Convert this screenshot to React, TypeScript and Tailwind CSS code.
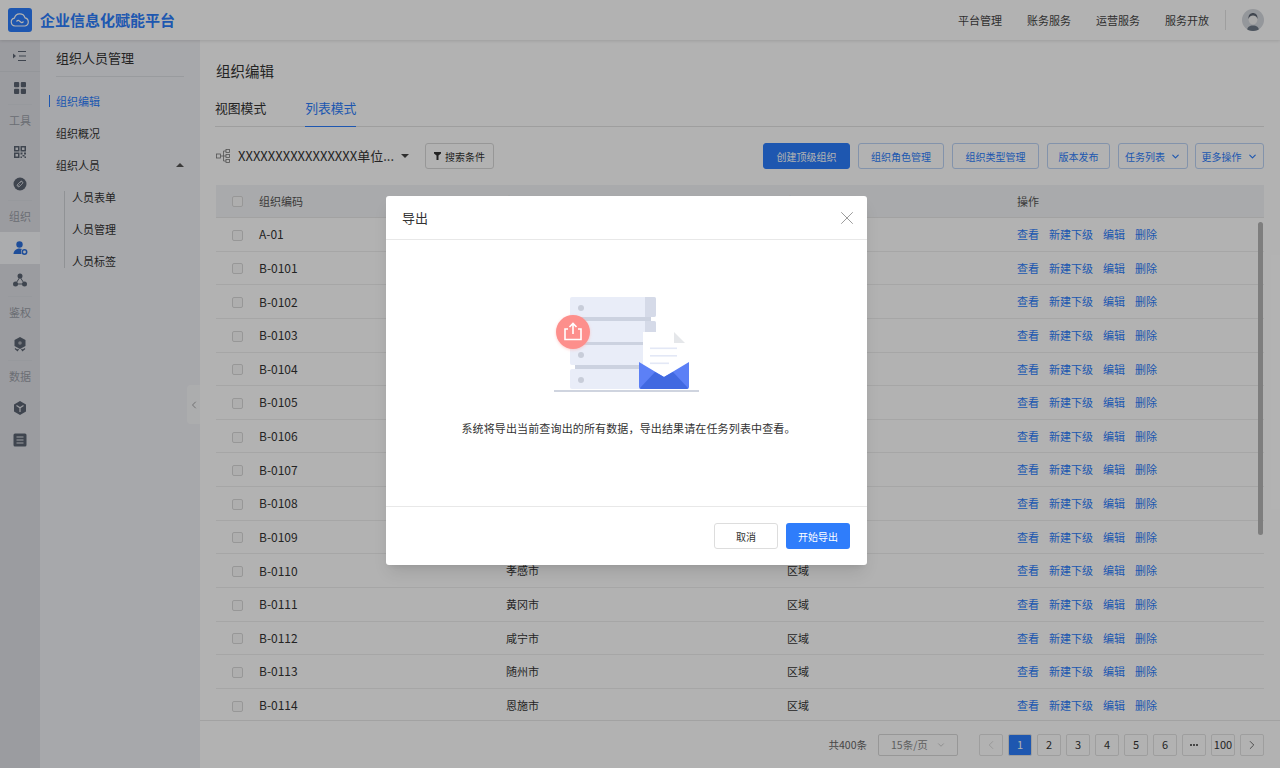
import { ChevronDown, ChevronLeft, ChevronRight, X } from "lucide-react";

const blue = "text-[#2b7dfc]";

const rowData = [
  { code: "A-01", name: "", type: "" },
  { code: "B-0101", name: "", type: "" },
  { code: "B-0102", name: "", type: "" },
  { code: "B-0103", name: "", type: "" },
  { code: "B-0104", name: "", type: "" },
  { code: "B-0105", name: "", type: "" },
  { code: "B-0106", name: "", type: "" },
  { code: "B-0107", name: "", type: "" },
  { code: "B-0108", name: "", type: "" },
  { code: "B-0109", name: "", type: "" },
  { code: "B-0110", name: "孝感市", type: "区域" },
  { code: "B-0111", name: "黄冈市", type: "区域" },
  { code: "B-0112", name: "咸宁市", type: "区域" },
  { code: "B-0113", name: "随州市", type: "区域" },
  { code: "B-0114", name: "恩施市", type: "区域" },
];

function RailIcon({ children }: { children: React.ReactNode }) {
  return (
    <div className="h-8 flex items-center justify-center">
      <svg width="16" height="16" viewBox="0 0 16 16" fill="#5b6472">
        {children}
      </svg>
    </div>
  );
}

function RailLabel({ children }: { children: React.ReactNode }) {
  return (
    <div className="h-8 mx-2 border-t border-[#d9dbe1] flex items-center justify-center text-[11px] text-[#9a9ea6]">
      {children}
    </div>
  );
}

function Rail() {
  return (
    <div className="w-10 shrink-0 bg-[#dfe0e6] flex flex-col">
      <div className="h-8 border-b border-[#d5d7dd] flex items-center justify-center">
        <svg width="16" height="14" viewBox="0 0 16 14" fill="none" stroke="#5b6472">
          <path d="M1 4.500v5l3-2.500z" fill="#5b6472" stroke="none" />
          <path d="M6 2.500h8M7 7h7M6 11.500h8" />
        </svg>
      </div>
      <RailIcon>
        <rect x="2" y="2" width="5.200" height="5.200" rx="1" />
        <rect x="8.800" y="2" width="5.200" height="5.200" rx="1" />
        <rect x="2" y="8.800" width="5.200" height="5.200" rx="1" />
        <rect x="8.800" y="8.800" width="5.200" height="5.200" rx="1" />
      </RailIcon>
      <RailLabel>工具</RailLabel>
      <RailIcon>
        <path d="M2 2h5.500v5.500H2zM3.500 3.500V6H6V3.500zM8.500 2H14v5.500H8.500zM10 3.500V6h2.500V3.500zM2 8.500h5.500V14H2zM3.500 10v2.500H6V10z" fillRule="evenodd" />
        <path d="M8.500 8.500h2v2h-2zM12 8.500h2v2h-2zM10.500 11h2v1.500h-2zM8.500 12.500h1.500V14H8.500zM12.500 12.500H14V14h-1.500z" />
      </RailIcon>
      <RailIcon>
        <circle cx="8" cy="8" r="6.500" />
        <path d="M9.500 5.500l-1 1M6.500 9.500l1-1M6.800 7.200L5.700 8.300a1.400 1.400 0 0 0 2 2l1.100-1.100M9.200 8.800l1.100-1.100a1.400 1.400 0 0 0-2-2L7.200 6.800" fill="none" stroke="#dfe0e6" />
      </RailIcon>
      <RailLabel>组织</RailLabel>
      <div className="h-8 bg-[#f5f6f9] flex items-center justify-center">
        <svg width="16" height="16" viewBox="0 0 16 16" fill="#2b6fdc">
          <circle cx="7.500" cy="4.500" r="3.200" />
          <path d="M1.500 14c0-3 2.500-5.500 6-5.500 1 0 1.800.2 2.500.5-1 .8-1.500 3-.5 5z" />
          <circle cx="12.500" cy="12" r="2.200" fill="none" stroke="#2b6fdc" strokeWidth="1.500" />
        </svg>
      </div>
      <RailIcon>
        <circle cx="8" cy="4" r="2.500" />
        <circle cx="3.500" cy="12" r="2.500" />
        <circle cx="12.500" cy="12" r="2.500" />
        <path d="M8 5L3.500 12h9z" fill="none" stroke="#5b6472" />
      </RailIcon>
      <RailLabel>鉴权</RailLabel>
      <RailIcon>
        <path d="M8 1l5.500 3v6L8 13l-5.500-3V4z" />
        <path d="M3 12.500l2.500 2 1-1.500M13 12.500l-2.500 2-1-1.500" fill="none" stroke="#5b6472" strokeWidth="1.200" />
        <circle cx="8" cy="7" r="1.800" fill="#a9adb5" />
      </RailIcon>
      <RailLabel>数据</RailLabel>
      <RailIcon>
        <path d="M8 1l6 3.400v7.200L8 15l-6-3.400V4.400z" />
        <path d="M4.500 5.500L8 7.800l3.500-2.300M8 7.800V12" fill="none" stroke="#dfe0e6" strokeWidth="1.200" />
      </RailIcon>
      <RailIcon>
        <rect x="1.500" y="1.500" width="13" height="13" rx="1.500" />
        <path d="M4.500 5h7M4.500 8h7M4.500 11h7" stroke="#dfe0e6" strokeWidth="1.200" />
      </RailIcon>
    </div>
  );
}

function SubMenu() {
  return (
    <div className="relative w-40 shrink-0 bg-[#f0f1f5] text-[11px] text-[#333]">
      <div className="mx-4 h-[37px] border-b border-[#dcdee3] flex items-center text-[13px]">组织人员管理</div>
      <div className="mt-2">
        <div className={`relative h-8 pl-4 flex items-center ${blue}`}>
          组织编辑
          <span className="absolute left-[9px] top-[10px] w-px h-3 bg-[#2b7dfc]" />
        </div>
        <div className="h-8 pl-4 flex items-center">组织概况</div>
        <div className="h-8 px-4 flex items-center justify-between">
          组织人员
          <svg width="8" height="4" viewBox="0 0 8 4" fill="#555"><path d="M4 0l4 4H0z" /></svg>
        </div>
        <div className="relative ml-6">
          <span className="absolute left-0 top-[10px] bottom-[9px] w-px bg-[#cfd1d6]" />
          <div className="h-8 pl-2 flex items-center">人员表单</div>
          <div className="h-8 pl-2 flex items-center">人员管理</div>
          <div className="h-8 pl-2 flex items-center">人员标签</div>
        </div>
      </div>
      <div className="absolute right-0 top-[345px] w-[13px] h-[39px] bg-[#f7f8fa] rounded-l flex items-center justify-center">
        <ChevronLeft size={12} strokeWidth={1.2} color="#666" />
      </div>
    </div>
  );
}

function ToolButton({ children, w, primary }: { children: React.ReactNode; w: string; primary?: boolean }) {
  return (
    <div
      className={`${w} h-[26px] rounded-[3px] border flex items-center justify-center gap-[5px] text-[10px] ${
        primary ? "bg-[#2b7dfc] border-[#2b7dfc] text-white" : "bg-white border-[#bcd3f5] text-[#2b7dfc]"
      }`}
    >
      {children}
    </div>
  );
}

function Checkbox() {
  return <div className="w-[11px] h-[11px] rounded-[2px] border border-[#d9d9d9] bg-[#fafafa]" />;
}

function Toolbar() {
  return (
    <div className="mt-4 h-[26px] flex items-center">
      <svg width="15" height="14" viewBox="0 0 15 14" fill="none" stroke="#777" strokeWidth="0.8">
        <rect x="0.500" y="5" width="4" height="4" />
        <rect x="10" y="0.500" width="3.500" height="3" />
        <rect x="10" y="5.500" width="3.500" height="3" />
        <rect x="10" y="10.500" width="3.500" height="3" />
        <path d="M4.500 7H10M7.500 2v10M7.500 2H10M7.500 12H10" />
      </svg>
      <span className="ml-[7px] text-[13px] text-[#333]">XXXXXXXXXXXXXXXX单位...</span>
      <svg className="ml-[7px]" width="8" height="4" viewBox="0 0 8 4" fill="#444"><path d="M0 0h8L4 4z" /></svg>
      <div className="ml-4 w-[69px] h-[26px] rounded-[3px] border border-[#d9d9d9] flex items-center justify-center gap-1 text-[10px] text-[#333]">
        <svg width="7" height="8" viewBox="0 0 7 8" fill="#333"><path d="M0 0h7v1.500L4.500 3.500V8h-2V3.500L0 1.500z" /></svg>
        搜索条件
      </div>
      <div className="ml-auto flex gap-2">
        <ToolButton w="w-[87px]" primary>创建顶级组织</ToolButton>
        <ToolButton w="w-[86px]">组织角色管理</ToolButton>
        <ToolButton w="w-[87px]">组织类型管理</ToolButton>
        <ToolButton w="w-[63px]">版本发布</ToolButton>
        <ToolButton w="w-[70px]">任务列表<ChevronDown size={11} strokeWidth={2.5} /></ToolButton>
        <div className="-ml-px">
          <ToolButton w="w-[69px]">更多操作<ChevronDown size={11} strokeWidth={2.5} /></ToolButton>
        </div>
      </div>
    </div>
  );
}

function Table() {
  return (
    <div className="relative mt-4 text-[11px] text-[#333]">
      <div className="h-[33px] bg-[#f3f4f6] border-b border-[#e8e8e8] flex items-center text-[#555]">
        <div className="w-[43px] pl-4"><Checkbox /></div>
        <div className="w-[247px]">组织编码</div>
        <div className="w-[281px]">组织名称</div>
        <div className="w-[230px]">组织类型</div>
        <div>操作</div>
      </div>
      {rowData.map((row) => (
        <div key={row.code} className="h-[33.640px] border-b border-[#eeeeee] flex items-center">
          <div className="w-[43px] pl-4 mt-[2px]"><Checkbox /></div>
          <div className="w-[247px] text-[12px]">{row.code}</div>
          <div className="w-[281px]">{row.name}</div>
          <div className="w-[230px]">{row.type}</div>
          <div className={`flex gap-[10px] ${blue}`}>
            <span>查看</span>
            <span>新建下级</span>
            <span>编辑</span>
            <span>删除</span>
          </div>
        </div>
      ))}
      <div className="absolute right-[1px] top-[37px] w-[5px] h-[313px] rounded bg-[#b5b5b5]" />
    </div>
  );
}

function Pager() {
  const cell = "w-6 h-[22px] rounded-[2px] border border-[#e3e3e3] flex items-center justify-center";
  return (
    <div className="absolute left-0 right-0 bottom-0 h-12 bg-white border-t border-[#e8e8e8] pr-4 flex items-center justify-end text-[11px] text-[#333]">
      <span className="text-[10.500px] text-[#666]">共400条</span>
      <div className="ml-[11px] w-20 h-[22px] rounded-[2px] border border-[#d9d9d9] flex items-center text-[10.500px] text-[#888]">
        <span className="ml-[12px]">15条/页</span>
        <ChevronDown className="ml-auto mr-[11px]" size={10} strokeWidth={1} />
      </div>
      <div className="ml-[21px] flex gap-[5px]">
        <div className={`${cell} text-[#ccc]`}><ChevronLeft size={14} strokeWidth={1.2} /></div>
        <div className={`${cell} bg-[#2b7dfc] border-[#2b7dfc] text-white`}>1</div>
        {["2", "3", "4", "5", "6"].map((p) => (
          <div key={p} className={cell}>{p}</div>
        ))}
        <div className={cell}>
          <svg width="8" height="2" viewBox="0 0 8 2" fill="#333">
            <circle cx="1" cy="1" r="1" />
            <circle cx="4" cy="1" r="1" />
            <circle cx="7" cy="1" r="1" />
          </svg>
        </div>
        <div className={cell}>100</div>
        <div className={cell}><ChevronRight size={14} strokeWidth={1.2} /></div>
      </div>
    </div>
  );
}

function ExportArt() {
  return (
    <svg width="190" height="125" viewBox="530 280 190 125">
      <defs>
        <filter id="soft" x="-30%" y="-30%" width="160%" height="160%">
          <feGaussianBlur stdDeviation="1.500" />
        </filter>
      </defs>
      <rect x="575" y="316" width="76" height="6" fill="#ccd2e0" />
      <rect x="575" y="340" width="76" height="6" fill="#ccd2e0" />
      <rect x="575" y="364" width="70" height="6" fill="#ccd2e0" />
      <rect x="570" y="297" width="86" height="20" rx="2" fill="#e9edf8" />
      <path d="M645 297h9a2 2 0 0 1 2 2v16a2 2 0 0 1-2 2h-9z" fill="#d5dae8" />
      <rect x="570" y="321" width="86" height="21" rx="2" fill="#e9edf8" />
      <path d="M645 321h9a2 2 0 0 1 2 2v17a2 2 0 0 1-2 2h-9z" fill="#d5dae8" />
      <rect x="570" y="345" width="80" height="20" rx="2" fill="#e9edf8" />
      <rect x="570" y="369" width="80" height="20" rx="2" fill="#e9edf8" />
      <circle cx="581" cy="308" r="3" fill="#c8cdd9" />
      <circle cx="581" cy="355" r="3" fill="#c8cdd9" />
      <circle cx="581" cy="380" r="3" fill="#c8cdd9" />
      <rect x="554" y="390" width="145" height="2" fill="#cfd4df" />
      <circle cx="573" cy="333" r="17" fill="#ffb3b0" opacity="0.6" filter="url(#soft)" />
      <circle cx="573" cy="332" r="17" fill="#fd8f8c" />
      <path d="M568 329h-3v10.500h16V329h-3" fill="none" stroke="#fff" strokeWidth="1.600" />
      <path d="M573 334v-10M569.500 327l3.500-3.500 3.500 3.500" fill="none" stroke="#fff" strokeWidth="1.600" />
      <path d="M643 332h31l11 11v40h-42z" fill="#fff" />
      <path d="M674 332l11 11h-11z" fill="#e5e7ea" />
      <rect x="650" y="347.500" width="27" height="1.600" fill="#e3e8f6" />
      <rect x="650" y="355" width="27" height="1.600" fill="#e3e8f6" />
      <rect x="650" y="362.500" width="19" height="1.600" fill="#e3e8f6" />
      <path d="M639 362l25 15 25-15v25a2 2 0 0 1-2 2h-46a2 2 0 0 1-2-2z" fill="#5c80f6" />
      <path d="M640 388l15-16 9 5 9-5 15 16a2 2 0 0 1-1 1h-46a2 2 0 0 1-1-1z" fill="#4169e1" />
    </svg>
  );
}

function ExportDialog() {
  return (
    <div className="absolute inset-0 z-20 bg-black/30 pl-[386px] pt-[196px]">
      <div className="w-[481px] h-[369px] bg-white rounded-[3px] shadow-lg flex flex-col text-[#333]">
        <div className="h-11 pl-4 pr-[9px] border-b border-[#e8e8e8] flex items-center justify-between text-[13px]">
          导出
          <X size={22} strokeWidth={0.8} color="#777" />
        </div>
        <div className="flex-1 flex flex-col items-center text-[11px]">
          <div className="mt-10 -ml-1">
            <ExportArt />
          </div>
          <p className="mt-[15px] ml-1 tracking-[0.140px]">系统将导出当前查询出的所有数据，导出结果请在任务列表中查看。</p>
        </div>
        <div className="h-[59px] border-t border-[#e8e8e8] pr-[17px] flex items-center justify-end gap-2 text-[10px]">
          <div className="w-16 h-[26px] rounded-[3px] border border-[#dddddd] flex items-center justify-center">取消</div>
          <div className="w-16 h-[26px] rounded-[3px] bg-[#2f7dfb] text-white flex items-center justify-center">开始导出</div>
        </div>
      </div>
    </div>
  );
}

export default function App() {
  return (
    <div className="relative w-[1280px] h-[768px] overflow-hidden bg-white font-['Noto_Sans_CJK_SC','Noto_Sans',sans-serif]">
      <header className="relative z-10 h-10 bg-white shadow-[0_1px_3px_rgba(0,0,0,0.12)] flex items-center">
        <div className="ml-2 w-6 h-6 rounded-[3px] bg-[#2b7dfc] flex items-center justify-center">
          <svg width="20" height="14" viewBox="0 0 20 14" fill="none" stroke="#fff" strokeWidth="1.200">
            <path d="M5 13a4 4 0 0 1-.6-7.900A5.500 5.500 0 0 1 15 4.800 4.200 4.200 0 0 1 15 13z" />
            <path d="M6.500 8.500c1.500-1.800 2.500-1 3.500 0s2 1.800 3.500 0" />
          </svg>
        </div>
        <span className="ml-2 text-[15px] font-bold text-[#2b7dfc]">企业信息化赋能平台</span>
        <nav className="ml-auto flex gap-[25px] text-[11px] text-[#444]">
          <span>平台管理</span>
          <span>账务服务</span>
          <span>运营服务</span>
          <span>服务开放</span>
        </nav>
        <div className="ml-4 w-px h-5 bg-[#e3e3e3]" />
        <div className="ml-4 mr-4 w-[22px] h-[22px] rounded-full bg-[#d5d8de] overflow-hidden">
          <svg width="22" height="22" viewBox="0 0 22 22">
            <path d="M5 22c0-4 2.500-5.500 6-5.500s6 1.500 6 5.500z" fill="#6f7a88" />
            <ellipse cx="11" cy="10" rx="4.500" ry="5.500" fill="#f3f3f3" />
            <path d="M6.500 10c-.5-4 2-6 4.500-6s5 2 4.500 6c-1-3-2.500-3.500-4.500-3.500S7.500 7 6.500 10z" fill="#5d6673" />
          </svg>
        </div>
      </header>
      <div className="flex h-[728px]">
        <Rail />
        <SubMenu />
        <main className="relative flex-1 min-w-0 overflow-hidden px-4">
          <h1 className="mt-[21px] text-[14.500px] leading-5 text-[#333]">组织编辑</h1>
          <div className="mt-[17px] h-[29px] border-b border-[#e3e3e3] flex gap-[39px] text-[12.800px] text-[#333] -ml-px">
            <span className="h-[29px]">视图模式</span>
            <span className={`h-[29px] border-b border-[#2b7dfc] ${blue}`}>列表模式</span>
          </div>
          <Toolbar />
          <Table />
          <Pager />
        </main>
      </div>
      <ExportDialog />
    </div>
  );
}
